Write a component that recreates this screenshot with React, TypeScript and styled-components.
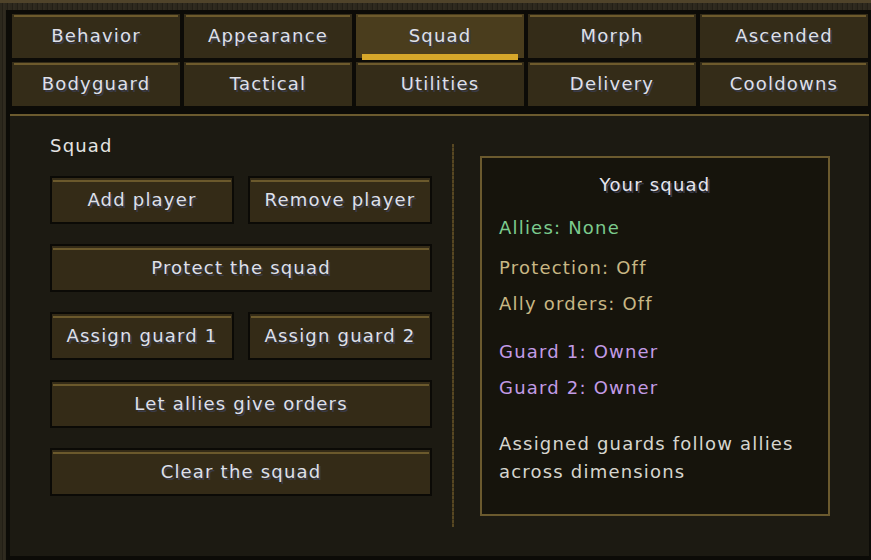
import { createGlobalStyle, styled } from "styled-components";

const GlobalStyle = createGlobalStyle`
  html, body {
    margin: 0;
    padding: 0;
  }
  body {
    width: 871px;
    height: 560px;
    overflow: hidden;
    background:
      linear-gradient(#4f432a 0 3px, transparent 3px),
      repeating-linear-gradient(90deg, #2c281d 0 2px, #231f16 2px 3px, #302b20 3px 5px),
      #27231a;
    font-family: "DejaVu Sans", "Noto Sans", sans-serif;
  }
`;

const Frame = styled.div`
  margin: 10px 0 0 6px;
  width: 865px;
  height: 550px;
  background: #0c0b07;
  display: flex;
  flex-direction: column;
`;

const TabGrid = styled.div`
  display: grid;
  grid-template-columns: repeat(5, 168px);
  grid-auto-rows: 44px;
  gap: 4px;
  padding: 4px 0 0 6px;
`;

const Tab = styled.div<{ $active?: boolean }>`
  position: relative;
  display: flex;
  align-items: center;
  justify-content: center;
  background:
    linear-gradient(#6d5a2c, #6d5a2c) 2px 1px / calc(100% - 4px) 2px no-repeat,
    ${(p) => (p.$active ? "#4a3d1d" : "#342c18")};
  color: #dfe0e9;
  font-size: 18px;
  line-height: 20px;
  letter-spacing: 1.2px;
  text-shadow: 2px 2px 0 #3b3c4b;
`;

const Underline = styled.span`
  position: absolute;
  left: 6px;
  right: 6px;
  bottom: -2px;
  height: 6px;
  background: #d6a72a;
`;

const Content = styled.div`
  margin: 8px 2px 4px 4px;
  flex: 1;
  background: #1c1a12;
  border-top: 2px solid #6b5a2e;
  display: flex;
  align-items: flex-start;
  padding: 20px 0 0 40px;
`;

const LeftCol = styled.div`
  width: 382px;
  display: flex;
  flex-direction: column;
  gap: 20px;
`;

const Label = styled.div`
  color: #e4e4e2;
  font-size: 18px;
  line-height: 20px;
  letter-spacing: 1.2px;
`;

const ButtonRow = styled.div<{ $cols: number }>`
  display: grid;
  grid-template-columns: repeat(${(p) => p.$cols}, 1fr);
  gap: 14px;
`;

const Button = styled.button`
  height: 48px;
  padding: 0;
  border: 2px solid #0b0a06;
  background:
    linear-gradient(#6b592c, #6b592c) 1px 2px / calc(100% - 2px) 2px no-repeat,
    #342b17;
  color: #dfe0e9;
  font-family: "DejaVu Sans", "Noto Sans", sans-serif;
  font-size: 18px;
  line-height: 20px;
  letter-spacing: 1.2px;
  text-shadow: 2px 2px 0 #3b3c4b;
  cursor: pointer;
`;

const Divider = styled.div`
  margin: 8px 0 0 20px;
  width: 2px;
  height: 383px;
  background: repeating-linear-gradient(#574722 0 3px, #3e3319 3px 4px);
`;

const InfoBox = styled.div`
  margin: 20px 0 0 26px;
  width: 350px;
  height: 360px;
  box-sizing: border-box;
  border: 2px solid #6b5a2e;
  background: #16140c;
  padding: 17px 17px 0 17px;
  font-size: 18px;
  line-height: 20px;
  letter-spacing: 1.2px;
`;

const Title = styled.div`
  text-align: center;
  color: #e6e6ee;
  text-shadow: 2px 2px 0 #3b3c4b;
`;

const Line = styled.div<{ $color: string; $top: number }>`
  color: ${(p) => p.$color};
  margin-top: ${(p) => p.$top}px;
`;

const Note = styled.p`
  margin: 32px 0 0;
  color: #d6d6cf;
  line-height: 28px;
`;

const tabs = [
  "Behavior",
  "Appearance",
  "Squad",
  "Morph",
  "Ascended",
  "Bodyguard",
  "Tactical",
  "Utilities",
  "Delivery",
  "Cooldowns",
];

const buttonRows = [
  ["Add player", "Remove player"],
  ["Protect the squad"],
  ["Assign guard 1", "Assign guard 2"],
  ["Let allies give orders"],
  ["Clear the squad"],
];

const GREEN = "#7ccb8e";
const TAN = "#c8b784";
const PURPLE = "#c29be6";

export default function App() {
  return (
    <>
      <GlobalStyle />
      <Frame>
        <TabGrid>
          {tabs.map((t) => (
            <Tab key={t} $active={t === "Squad"}>
              {t}
              {t === "Squad" && <Underline />}
            </Tab>
          ))}
        </TabGrid>
        <Content>
          <LeftCol>
            <Label>Squad</Label>
            {buttonRows.map((row, i) => (
              <ButtonRow key={i} $cols={row.length}>
                {row.map((b) => (
                  <Button key={b}>{b}</Button>
                ))}
              </ButtonRow>
            ))}
          </LeftCol>
          <Divider />
          <InfoBox>
            <Title>Your squad</Title>
            <Line $color={GREEN} $top={23}>
              Allies: None
            </Line>
            <Line $color={TAN} $top={20}>
              Protection: Off
            </Line>
            <Line $color={TAN} $top={16}>
              Ally orders: Off
            </Line>
            <Line $color={PURPLE} $top={28}>
              Guard 1: Owner
            </Line>
            <Line $color={PURPLE} $top={16}>
              Guard 2: Owner
            </Line>
            <Note>Assigned guards follow allies across dimensions</Note>
          </InfoBox>
        </Content>
      </Frame>
    </>
  );
}
